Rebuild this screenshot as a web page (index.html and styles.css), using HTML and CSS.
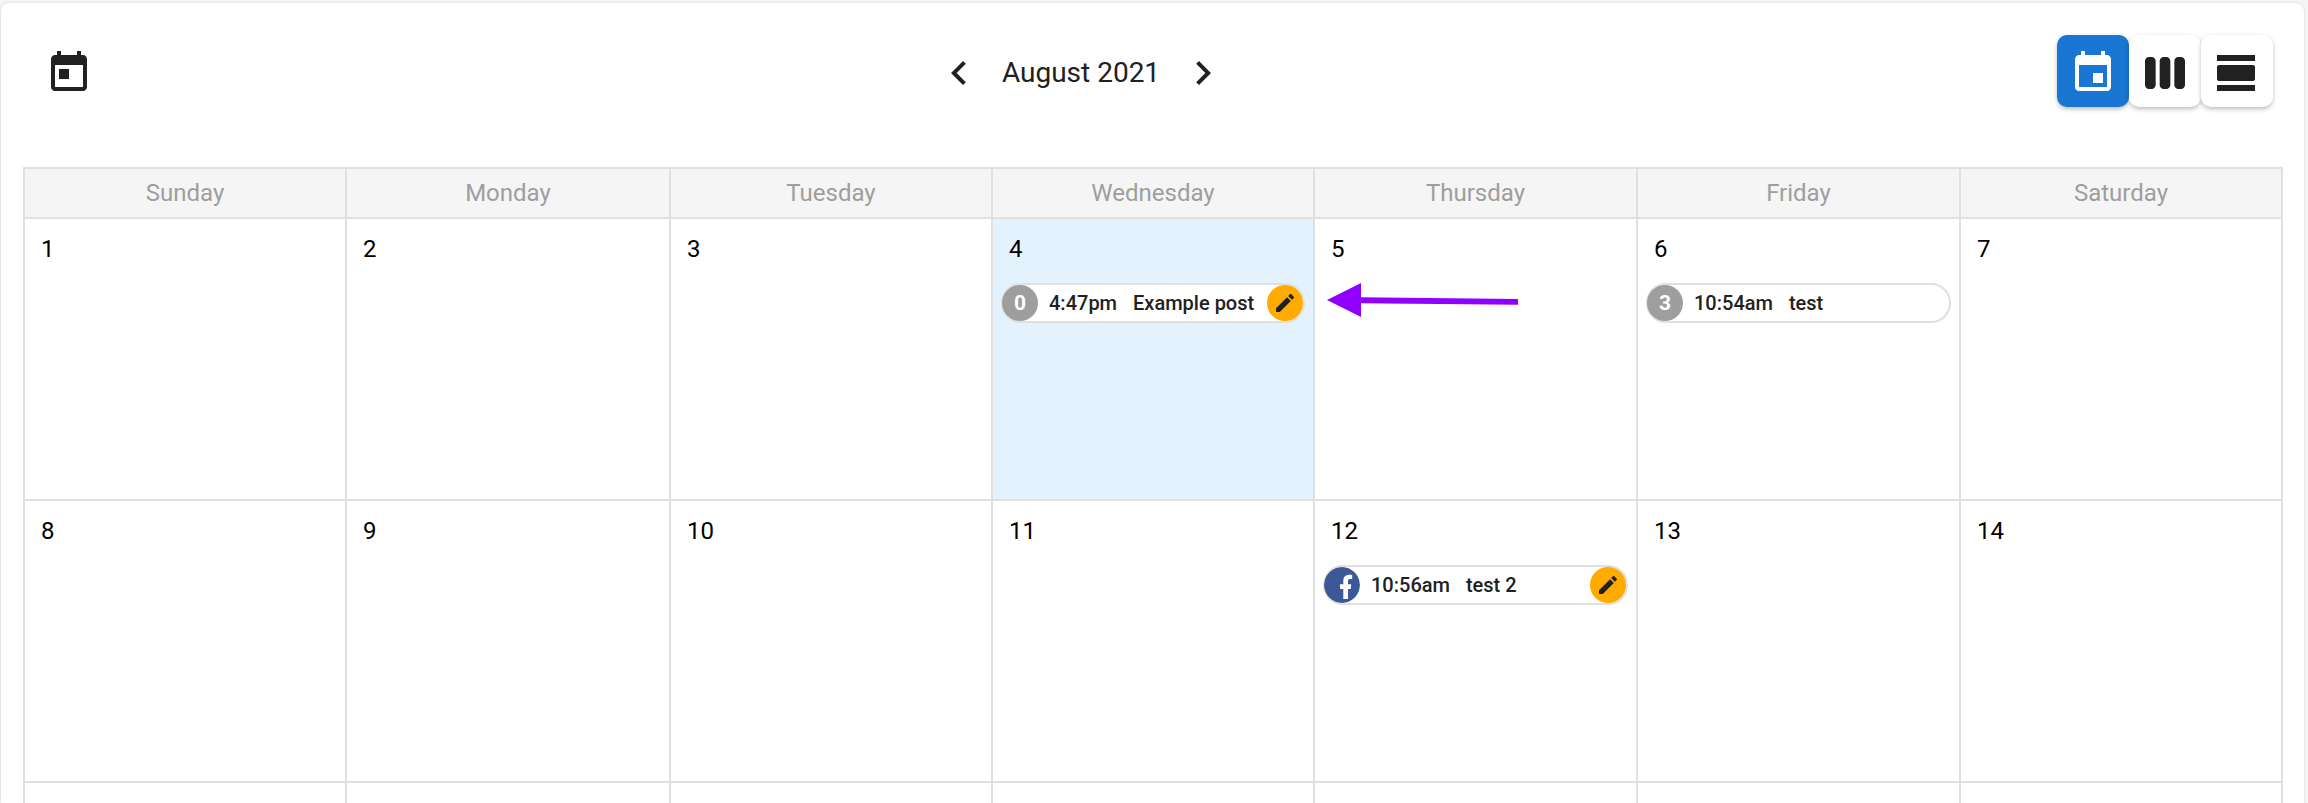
FILE: index.html
```html
<!DOCTYPE html>
<html lang="en">
<head>
    <meta charset="UTF-8">
    <title>Calendar</title>
    <link rel="stylesheet" href="styles.css">
</head>
<body>
    <div class="card">
        <div class="toolbar">
            <svg class="icon today-icon" viewBox="0 0 24 24"><path d="M19 3h-1V1h-2v2H8V1H6v2H5c-1.11 0-1.99.9-1.99 2L3 19c0 1.1.89 2 2 2h14c1.1 0 2-.9 2-2V5c0-1.1-.9-2-2-2zm0 16H5V8h14v11zM7 10h5v5H7z"/></svg>

            <div class="month-nav">
                <svg class="icon" viewBox="0 0 24 24"><path d="M15.41 7.41L14 6l-6 6 6 6 1.41-1.41L10.83 12z"/></svg>
                <div class="month-label">August 2021</div>
                <svg class="icon" viewBox="0 0 24 24"><path d="M10 6L8.59 7.41 13.17 12l-4.58 4.59L10 18l6-6z"/></svg>
            </div>

            <div class="view-buttons">
                <div class="view-button active">
                    <svg class="icon" viewBox="0 0 24 24"><path d="M17 12h-5v5h5v-5zM16 1v2H8V1H6v2H5c-1.11 0-1.99.9-1.99 2L3 19c0 1.1.89 2 2 2h14c1.1 0 2-.9 2-2V5c0-1.1-.9-2-2-2h-1V1h-2zm3 18H5V8h14v11z"/></svg>
                </div>
                <div class="view-button">
                    <svg class="icon" viewBox="0 0 24 24"><path d="M5.33 20H4c-1.1 0-2-.9-2-2V6c0-1.1.9-2 2-2h1.33c1.1 0 2 .9 2 2v12c0 1.1-.9 2-2 2zM22 18V6c0-1.1-.9-2-2-2h-1.33c-1.1 0-2 .9-2 2v12c0 1.1.9 2 2 2H20c1.1 0 2-.9 2-2zm-7.33 0V6c0-1.1-.9-2-2-2h-1.33c-1.1 0-2 .9-2 2v12c0 1.1.9 2 2 2h1.33c1.1 0 2-.9 2-2z"/></svg>
                </div>
                <div class="view-button">
                    <svg class="icon" viewBox="0 0 24 24"><path d="M2 21h19v-3H2v3zM20 8H3c-.55 0-1 .45-1 1v6c0 .55.45 1 1 1h17c.55 0 1-.45 1-1V9c0-.55-.45-1-1-1zM2 3v3h19V3H2z"/></svg>
                </div>
            </div>
        </div>

        <div class="calendar">
            <div class="weekday">Sunday</div>
            <div class="weekday">Monday</div>
            <div class="weekday">Tuesday</div>
            <div class="weekday">Wednesday</div>
            <div class="weekday">Thursday</div>
            <div class="weekday">Friday</div>
            <div class="weekday">Saturday</div>

            <div class="day"><div class="day-number">1</div></div>
            <div class="day"><div class="day-number">2</div></div>
            <div class="day"><div class="day-number">3</div></div>
            <div class="day today">
                <div class="day-number">4</div>
                <div class="post">
                    <div class="post-badge">0</div>
                    <span class="post-time">4:47pm</span>
                    <span class="post-title">Example post</span>
                    <div class="post-edit">
                        <svg class="edit-icon" viewBox="0 0 24 24"><path d="M3 17.25V21h3.75L17.81 9.94l-3.75-3.75L3 17.25zM20.71 7.04c.39-.39.39-1.02 0-1.41l-2.34-2.34c-.39-.39-1.02-.39-1.41 0l-1.83 1.83 3.75 3.75 1.83-1.83z"/></svg>
                    </div>
                </div>
            </div>
            <div class="day"><div class="day-number">5</div></div>
            <div class="day">
                <div class="day-number">6</div>
                <div class="post">
                    <div class="post-badge">3</div>
                    <span class="post-time">10:54am</span>
                    <span class="post-title">test</span>
                </div>
            </div>
            <div class="day"><div class="day-number">7</div></div>

            <div class="day"><div class="day-number">8</div></div>
            <div class="day"><div class="day-number">9</div></div>
            <div class="day"><div class="day-number">10</div></div>
            <div class="day"><div class="day-number">11</div></div>
            <div class="day">
                <div class="day-number">12</div>
                <div class="post">
                    <svg class="post-badge facebook" viewBox="0 0 36 36"><circle cx="18" cy="18" r="18" fill="#3b5998"/><path fill="#fff" d="M19.3 32V22H16v-4.700h3.300v-3.300c0-4 2.400-6.200 5.900-6.200 1.500 0 2.800.1 3 .2v4h-2.100c-1.700 0-2.100.9-2.100 2.200v3.100h3.200l-.5 4.700H24v10z"/></svg>
                    <span class="post-time">10:56am</span>
                    <span class="post-title">test 2</span>
                    <div class="post-edit">
                        <svg class="edit-icon" viewBox="0 0 24 24"><path d="M3 17.25V21h3.75L17.81 9.94l-3.75-3.75L3 17.25zM20.71 7.04c.39-.39.39-1.02 0-1.41l-2.34-2.34c-.39-.39-1.02-.39-1.41 0l-1.83 1.83 3.75 3.75 1.83-1.83z"/></svg>
                    </div>
                </div>
            </div>
            <div class="day"><div class="day-number">13</div></div>
            <div class="day"><div class="day-number">14</div></div>

            <div class="day"></div>
            <div class="day"></div>
            <div class="day"></div>
            <div class="day"></div>
            <div class="day"></div>
            <div class="day"></div>
            <div class="day"></div>
        </div>

        <svg class="arrow" width="192" height="36" viewBox="0 0 192 36"><path fill="#8f00ff" d="M0 17L34 0V14.300L191 16V21.700L34 20.300V34z"/></svg>
    </div>
</body>
</html>
```

FILE: styles.css
```css
* {
    margin: 0;
    padding: 0;
    box-sizing: border-box;
}

body {
    font-family: Roboto, 'Liberation Sans', sans-serif;
    background: #f5f5f5;
    color: #212121;
    height: 803px;
    overflow: hidden;
}

.card {
    position: relative;
    width: 2303px;
    height: 800px;
    margin: 3px 0 0 1px;
    padding: 32px 21px 0 22px;
    background: #fff;
    border-radius: 8px 8px 0 0;
    box-shadow: 0 0 2px rgba(0, 0, 0, 0.2);
    overflow: hidden;
}

.toolbar {
    display: flex;
    justify-content: space-between;
    align-items: flex-start;
    padding: 0 10px 0 22px;
    margin-bottom: 60px;
}

.icon {
    display: block;
    width: 48px;
    height: 48px;
    fill: currentColor;
    flex-shrink: 0;
}

.today-icon {
    margin-top: 14px;
}

.month-nav {
    display: flex;
    align-items: center;
    margin: 14px 0 0 12px;
}

.month-label {
    padding: 0 19px 2px 19px;
    font-size: 28px;
}

.view-buttons {
    display: flex;
}

.view-button {
    display: flex;
    justify-content: center;
    width: 72px;
    height: 72px;
    padding-top: 14px;
    background: #fff;
    border-radius: 10px;
    box-shadow: 0 3px 5px -1px rgba(0, 0, 0, 0.2), 0 1px 5px rgba(0, 0, 0, 0.12);
}

.view-button.active {
    background: #1976d2;
    color: #fff;
}

.calendar {
    display: grid;
    grid-template-columns: 322px 324px 322px 322px 323px 323px 322px;
    grid-template-rows: 50px;
    grid-auto-rows: 282px;
    border-top: 2px solid #e0e0e0;
    border-left: 2px solid #e0e0e0;
}

.weekday {
    display: flex;
    align-items: center;
    justify-content: center;
    background: #f5f5f5;
    border-right: 2px solid #e0e0e0;
    border-bottom: 2px solid #e0e0e0;
    color: #9e9e9e;
    font-size: 24px;
}

.day {
    padding: 12px 8px 0;
    border-right: 2px solid #e0e0e0;
    border-bottom: 2px solid #e0e0e0;
}

.today {
    background: #e3f2fd;
}

.day-number {
    height: 36px;
    margin: 0 0 16px 8px;
    color: #000;
    font-size: 24px;
    line-height: 36px;
}

.post {
    display: flex;
    align-items: center;
    height: 40px;
    background: #fff;
    border: 2px solid #e0e0e0;
    border-radius: 20px;
    font-size: 20px;
    font-weight: 500;
}

.post-badge {
    display: flex;
    align-items: center;
    justify-content: center;
    width: 36px;
    height: 36px;
    margin-left: -1px;
    background: #9e9e9e;
    border-radius: 50%;
    color: #fff;
    flex-shrink: 0;
    font-size: 21px;
    font-weight: 700;
}

.post-badge.facebook {
    display: block;
    background: none;
}

.post-time {
    margin-left: 11px;
}

.post-title {
    margin-left: 16px;
}

.post-edit {
    display: flex;
    align-items: center;
    justify-content: center;
    width: 36px;
    height: 36px;
    margin-left: auto;
    background: #ffab00;
    border-radius: 50%;
}

.edit-icon {
    width: 24px;
    height: 24px;
    fill: #212121;
}

.arrow {
    position: absolute;
    left: 1326px;
    top: 280px;
}
```
